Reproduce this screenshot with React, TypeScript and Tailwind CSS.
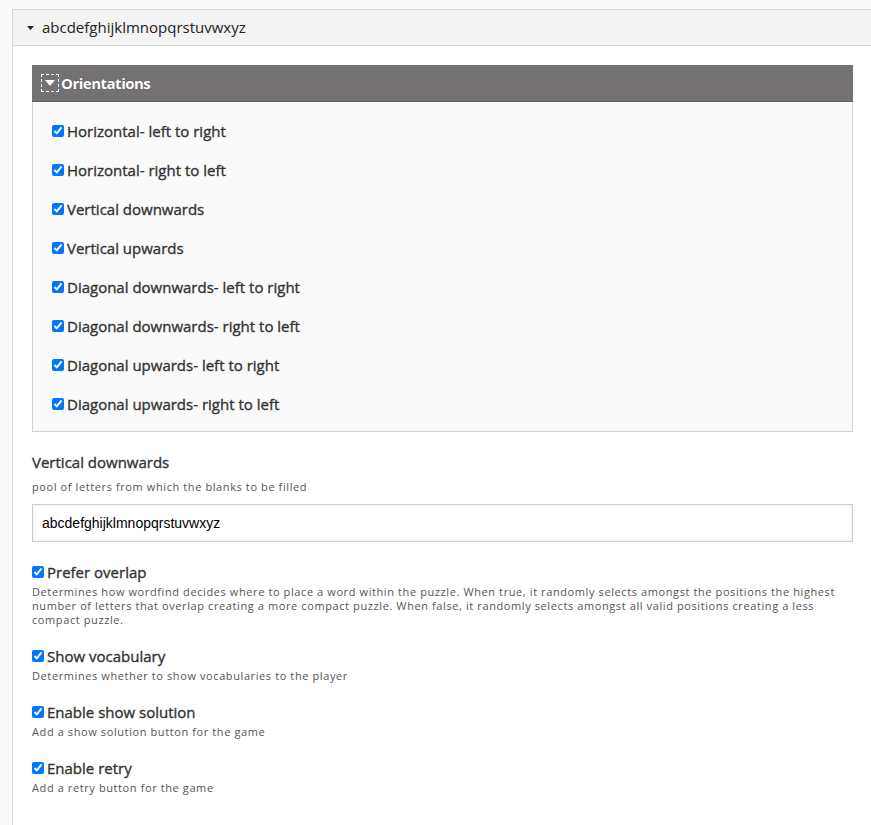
import { useState } from "react";

const orientations = [
  "Horizontal- left to right",
  "Horizontal- right to left",
  "Vertical downwards",
  "Vertical upwards",
  "Diagonal downwards- left to right",
  "Diagonal downwards- right to left",
  "Diagonal upwards- left to right",
  "Diagonal upwards- right to left",
];

const options = [
  {
    label: "Prefer overlap",
    desc: "Determines how wordfind decides where to place a word within the puzzle. When true, it randomly selects amongst the positions the highest number of letters that overlap creating a more compact puzzle. When false, it randomly selects amongst all valid positions creating a less compact puzzle.",
  },
  { label: "Show vocabulary", desc: "Determines whether to show vocabularies to the player" },
  { label: "Enable show solution", desc: "Add a show solution button for the game" },
  { label: "Enable retry", desc: "Add a retry button for the game" },
];

function Check() {
  return <input type="checkbox" defaultChecked className="w-[12px] h-[12px] m-0 accent-[#0075ff] shrink-0" />;
}

export default function App() {
  const [letters, setLetters] = useState("abcdefghijklmnopqrstuvwxyz");

  return (
    <div className="min-h-[825px] bg-[#fafafa] pt-[9px] pl-[12px] font-['Open_Sans',sans-serif] text-[#333]">
      <div className="border-l border-t border-[#d9d9d9] bg-white min-h-[816px] w-[900px]">
        <div className="h-[36px] bg-[#f3f3f3] border-b border-[#d9d9d9] flex items-center pl-[14px]">
          <svg width="7" height="4" viewBox="0 0 7 4" className="mr-[8px]">
            <path d="M0 0H7L3.5 4Z" fill="#222" />
          </svg>
          <span className="text-[15px] text-[#222]">abcdefghijklmnopqrstuvwxyz</span>
        </div>

        <div className="pl-[19px] w-[840px] pt-[19px]">
          <div className="border border-[#d3d3d3] bg-[#fafafa]">
            <div className="h-[37px] bg-[#737172] border-b border-[#5f5d5e] -m-px mb-0 flex items-center pl-[9px]">
              <div className="w-[18px] h-[18px] border border-dashed border-white flex items-center justify-center mr-[2px]">
                <svg width="10" height="6" viewBox="0 0 10 6">
                  <path d="M0 0H10L5 6Z" fill="#fff" />
                </svg>
              </div>
              <span className="text-white font-bold text-[15px] tracking-[-0.5px] [text-shadow:0_0_1px_rgba(0,0,0,0.4)]">
                Orientations
              </span>
            </div>
            <div className="pt-[18px] pb-[16px] pl-[19px] flex flex-col gap-[17px]">
              {orientations.map((o) => (
                <label
                  key={o}
                  className="flex items-center gap-[3px] h-[22px] text-[15px] text-[#333] [-webkit-text-stroke:0.35px_#333]"
                >
                  <Check />
                  <span>{o}</span>
                </label>
              ))}
            </div>
          </div>

          <div className="mt-[19px] text-[15px] text-[#333] [-webkit-text-stroke:0.35px_#333]">Vertical downwards</div>
          <div className="mt-[5px] text-[11px] tracking-[0.6px] text-[#555]">pool of letters from which the blanks to be filled</div>
          <input
            value={letters}
            onChange={(e) => setLetters(e.target.value)}
            className="mt-[9px] w-[821px] h-[38px] border border-[#ccc] bg-white shadow-[inset_0_0_4px_rgba(0,0,0,0.08)] px-[9px] text-[14px] text-black font-['Liberation_Sans',Arial,sans-serif] outline-none"
          />

          <div className="mt-[19px] flex flex-col gap-[18px]">
            {options.map((o) => (
              <div key={o.label}>
                <label className="flex items-center gap-[3px] h-[22px] text-[15px] text-[#333] [-webkit-text-stroke:0.35px_#333]">
                  <Check />
                  <span>{o.label}</span>
                </label>
                <div className="mt-[2px] text-[11px] leading-[14px] tracking-[0.6px] text-[#555] w-[815px]">{o.desc}</div>
              </div>
            ))}
          </div>
        </div>
      </div>
    </div>
  );
}
